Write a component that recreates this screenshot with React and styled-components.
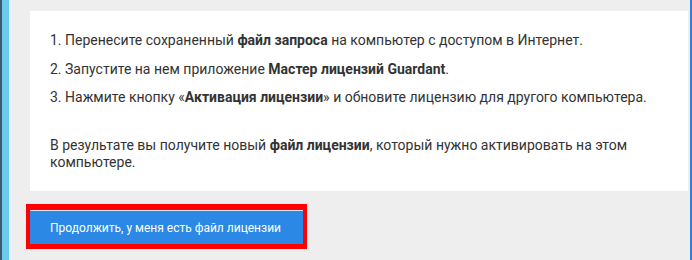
import React from 'react'
import styled, { createGlobalStyle } from 'styled-components'

const GlobalStyle = createGlobalStyle`
  html, body {
    margin: 0;
    padding: 0;
    background: #eeeeee;
  }
  body {
    font-family: Roboto, "Noto Sans", sans-serif;
  }
`

const Frame = styled.div`
  display: flex;
  height: 260px;
  width: 692px;
  overflow: hidden;
`

const LeftEdge = styled.div`
  width: 7px;
  flex-shrink: 0;
  background: #6ccbea;
  border-left: 2px solid #3b5875;
`

const RightEdge = styled.div`
  width: 2px;
  flex-shrink: 0;
  background: #2d7fd8;
`

const Main = styled.div`
  flex: 1;
  display: flex;
  flex-direction: column;
  align-items: flex-start;
  padding: 11px 2px 0 21px;
`

const Card = styled.div`
  align-self: stretch;
  background: #ffffff;
  padding: 21px 20px 20px 20px;
  color: #333333;
  font-size: 14px;
  line-height: 17px;
`

const Steps = styled.ol`
  list-style: none;
  margin: 0;
  padding: 0;
  display: flex;
  flex-direction: column;
  gap: 11.5px;
`

const Result = styled.p`
  margin: 31px 0 0 0;
  padding-right: 40px;
`

const Highlight = styled.div`
  margin: 13px 0 0 -4px;
  border: 4px solid #ff0000;
  border-top-width: 6px;
  border-bottom-width: 5px;
`

const Button = styled.button`
  display: block;
  box-sizing: border-box;
  border: none;
  border-top: 1px solid #d8e8f8;
  background: #2b88e4;
  color: #ffffff;
  font-family: Roboto, "Noto Sans", sans-serif;
  font-size: 12px;
  font-weight: 400;
  height: 34px;
  width: 273px;
  text-align: left;
  padding: 0 20px;
  cursor: pointer;
`

export default function App() {
  return (
    <>
      <GlobalStyle />
      <Frame>
        <LeftEdge />
        <Main>
          <Card>
            <Steps>
              <li>
                1. Перенесите сохраненный <b>файл запроса</b> на компьютер с доступом в Интернет.
              </li>
              <li>
                2. Запустите на нем приложение <b>Мастер лицензий Guardant</b>.
              </li>
              <li>
                3. Нажмите кнопку «<b>Активация лицензии</b>» и обновите лицензию для другого компьютера.
              </li>
            </Steps>
            <Result>
              В результате вы получите новый <b>файл лицензии</b>, который нужно активировать на этом компьютере.
            </Result>
          </Card>
          <Highlight>
            <Button>Продолжить, у меня есть файл лицензии</Button>
          </Highlight>
        </Main>
        <RightEdge />
      </Frame>
    </>
  )
}
